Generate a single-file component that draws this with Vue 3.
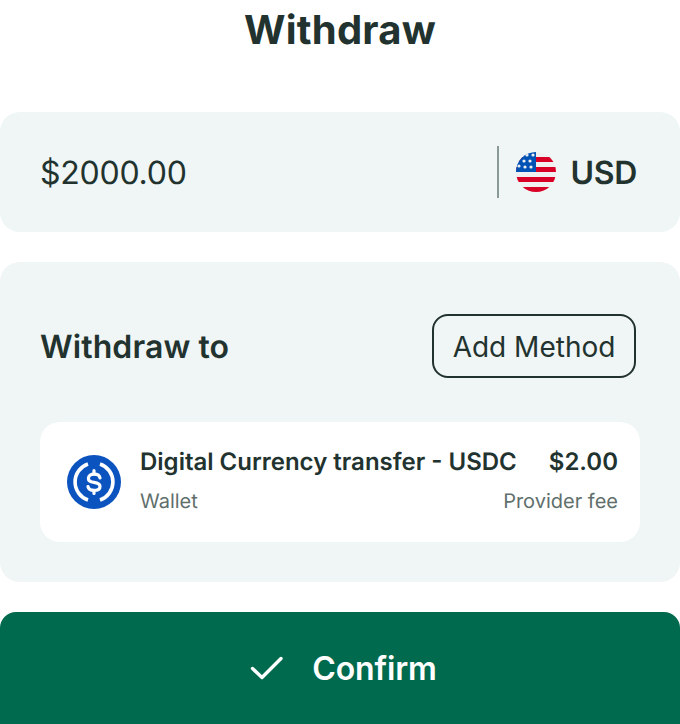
<template>
  <div class="page">
    <h1 class="title">Withdraw</h1>

    <section class="amount">
      <span class="amount__value">$2000.00</span>
      <div class="currency">
        <svg class="currency__flag" viewBox="0 0 40 40" width="40" height="40">
          <defs>
            <clipPath id="flag-clip"><circle cx="20" cy="20" r="20" /></clipPath>
          </defs>
          <g clip-path="url(#flag-clip)">
            <rect width="40" height="40" fill="#f0f0f0" />
            <rect x="0" y="5" width="40" height="5" fill="#d80027" />
            <rect x="0" y="15" width="40" height="5" fill="#d80027" />
            <rect x="0" y="25" width="40" height="5" fill="#d80027" />
            <rect x="0" y="35" width="40" height="5" fill="#d80027" />
            <rect x="0" y="0" width="20" height="20" fill="#0052b4" />
            <g fill="#f0f0f0">
              <circle v-for="s in stars" :key="s[0] + '-' + s[1]" :cx="s[0]" :cy="s[1]" r="1.6" />
            </g>
          </g>
        </svg>
        <span class="currency__code">USD</span>
      </div>
    </section>

    <section class="methods">
      <div class="methods__head">
        <h2 class="methods__title">Withdraw to</h2>
        <button class="add-btn"><span>Add Method</span></button>
      </div>

      <div class="method">
        <svg class="method__icon" viewBox="0 0 54 54" width="54" height="54">
          <circle cx="27" cy="27" r="27" fill="#0b53bf" />
          <path d="M21 9 A19 19 0 0 0 21 45" fill="none" stroke="#fff" stroke-width="3.6" />
          <path d="M33 9 A19 19 0 0 1 33 45" fill="none" stroke="#fff" stroke-width="3.6" />
          <path d="M33 23 C32.6 20.4 30.2 19.2 27 19.2 C23.6 19.2 21.4 20.9 21.4 23.4 C21.4 26 23.6 26.9 27 27.4 C30.6 27.9 33 28.9 33 31.5 C33 34 30.5 35.4 27 35.4 C23.9 35.4 21.5 34.2 21 31.6" fill="none" stroke="#fff" stroke-width="3.2" stroke-linecap="round" />
          <path d="M27 15.5 V19 M27 35.5 V38.5" stroke="#fff" stroke-width="3.2" stroke-linecap="round" />
        </svg>
        <div class="method__info">
          <div class="method__row">
            <span class="method__name">Digital Currency transfer - USDC</span>
            <span class="method__name">$2.00</span>
          </div>
          <div class="method__row">
            <span class="method__sub">Wallet</span>
            <span class="method__sub">Provider fee</span>
          </div>
        </div>
      </div>
    </section>

    <button class="confirm">
      <svg class="confirm__check" viewBox="0 0 34 26" width="34" height="26">
        <path d="M2.5 13.5 L12 22.5 L31 3.5" fill="none" stroke="#fff" stroke-width="3.4" stroke-linecap="round" stroke-linejoin="round" />
      </svg>
      <span class="confirm__label">Confirm</span>
    </button>
  </div>
</template>

<script setup>
const stars = [
  [5, 3], [11, 3], [17, 3],
  [8, 9], [14, 9],
  [3, 14], [9, 15], [15, 15],
]
</script>

<style>
html,
body {
  margin: 0;
  background: #fff;
}
</style>

<style scoped>
.page {
  width: 680px;
  font-family: Inter, "Liberation Sans", sans-serif;
  color: #22332f;
  display: flex;
  flex-direction: column;
  text-rendering: geometricPrecision;
}

.title {
  margin: 0;
  height: 112px;
  padding-top: 6px;
  box-sizing: border-box;
  font-size: 40px;
  line-height: 48px;
  font-weight: 700;
  letter-spacing: 0.25px;
  text-align: center;
}

.amount {
  height: 120px;
  box-sizing: border-box;
  padding: 0 43px 0 40px;
  background: #f0f5f5;
  border-radius: 20px;
  display: flex;
  align-items: center;
  justify-content: space-between;
}

.amount__value {
  font-size: 32px;
  line-height: 40px;
  letter-spacing: -0.25px;
  padding-top: 2px;
}

.currency {
  height: 52px;
  display: flex;
  align-items: center;
  padding-left: 17px;
  border-left: 2px solid #8a9a96;
}

.currency__flag {
  margin-right: 14px;
}

.currency__code {
  font-size: 32px;
  font-weight: 600;
  letter-spacing: -0.3px;
}

.methods {
  margin-top: 30px;
  height: 320px;
  box-sizing: border-box;
  padding: 52px 40px 40px;
  background: #f0f5f5;
  border-radius: 20px;
  display: flex;
  flex-direction: column;
  justify-content: space-between;
}

.methods__head {
  display: flex;
  align-items: center;
  justify-content: space-between;
}

.methods__title {
  margin: 0;
  padding-top: 2px;
  font-size: 32px;
  line-height: 40px;
  font-weight: 600;
  letter-spacing: 0.1px;
}

.add-btn {
  height: 64px;
  width: 204px;
  margin-right: 4px;
  background: transparent;
  border: 2px solid #22332f;
  border-radius: 16px;
  color: #22332f;
  font: inherit;
  font-size: 28px;
  padding: 2px 0 0;
}

.method {
  height: 120px;
  box-sizing: border-box;
  background: #fff;
  border-radius: 20px;
  padding: 0 22px 0 27px;
  display: flex;
  align-items: center;
  gap: 19px;
}

.method__info {
  flex: 1;
  display: flex;
  flex-direction: column;
  gap: 12px;
  padding-bottom: 2px;
}

.method__row {
  display: flex;
  justify-content: space-between;
}

.method__name {
  font-size: 24px;
  line-height: 28px;
  font-weight: 600;
}

.method__sub {
  font-size: 20px;
  line-height: 26px;
  color: #5f6f6c;
}

.confirm {
  margin-top: 30px;
  height: 112px;
  border: 0;
  padding: 0 0 0 7px;
  background: #006a4e;
  border-radius: 16px 16px 0 0;
  color: #fff;
  font: inherit;
  font-size: 32px;
  font-weight: 600;
  display: flex;
  align-items: center;
  justify-content: center;
  gap: 28px;
}

.confirm__label {
  letter-spacing: -0.15px;
}
</style>
